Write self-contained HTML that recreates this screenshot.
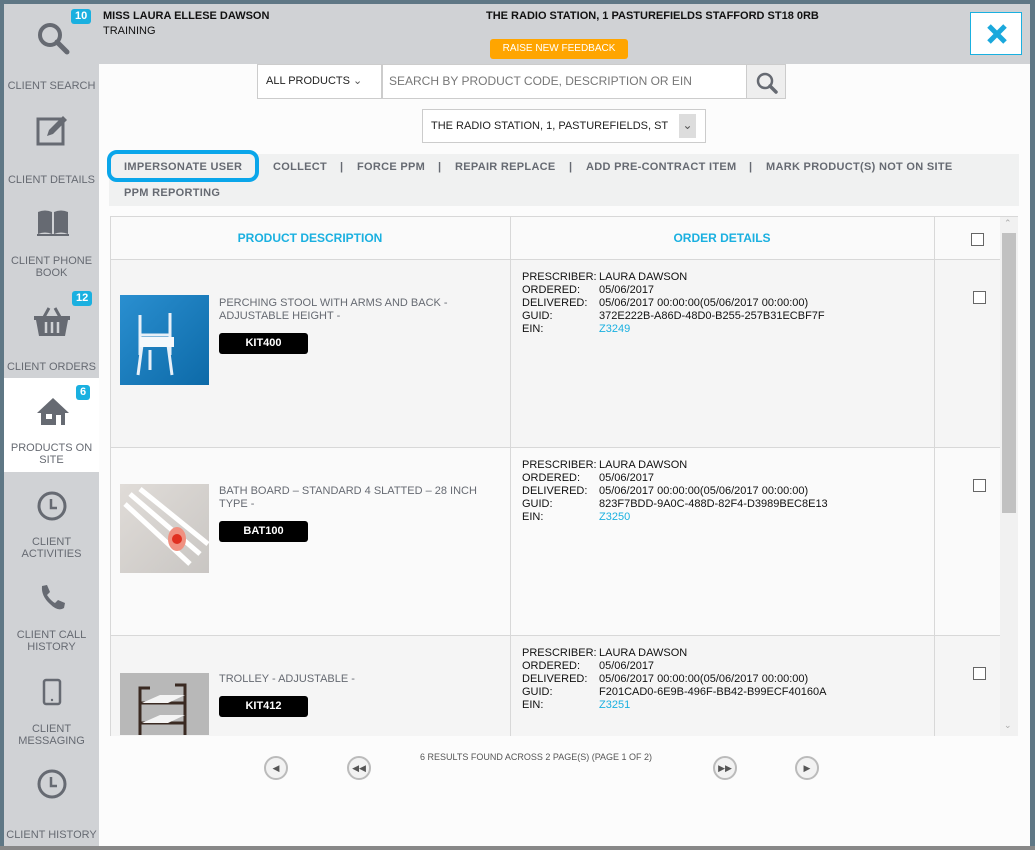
<!DOCTYPE html>
<html><head><meta charset="utf-8"><style>
*{margin:0;padding:0;box-sizing:border-box}
body{width:1035px;height:850px;overflow:hidden;background:#5f7785;font-family:"Liberation Sans",Arial,sans-serif;position:relative}
.a{position:absolute}
#frame{left:4px;top:4px;width:1026px;height:842px;background:#fcfcfc}
#side{left:4px;top:4px;width:95px;height:842px;background:#d0d2d5}
#head{left:99px;top:4px;width:931px;height:60px;background:#d0d2d5}
.nav{position:absolute;left:0;width:95px;text-align:center;color:#666a72;font-size:11px;line-height:12px}
.badge{position:absolute;background:#1ab0e0;color:#fff;font-size:11px;font-weight:bold;border-radius:3px;padding:1px 4px;line-height:13px}
.t{font-size:11px;color:#111}
.lnk{position:absolute;font-size:11px;font-weight:bold;color:#666a72;letter-spacing:0.3px;white-space:nowrap}
.code{position:absolute;left:219px;width:89px;height:21px;background:#000;color:#fff;font-weight:bold;font-size:11px;text-align:center;line-height:21px;border-radius:3px}
.desc{position:absolute;left:219px;font-size:11px;color:#666a72;line-height:13px;width:270px}
.od{position:absolute;left:522px;font-size:11px;color:#111;line-height:13px}
.od span{display:inline-block;width:77px}
.od b{font-weight:normal;color:#1ab0e0}
.cb{position:absolute;left:973px;width:13px;height:13px;border:1px solid #666;background:#fff}
.pg{position:absolute;top:756px;width:24px;height:24px;border-radius:50%;border:2px solid #bbb;background:#f2f2f2;color:#555;font-size:9px;text-align:center;line-height:20px}
</style></head><body>
<div class="a" id="frame"></div>
<div class="a" id="side">
  <svg class="a" style="left:32px;top:17px" width="36" height="36" viewBox="0 0 36 36"><circle cx="14" cy="14" r="10" fill="none" stroke="#666a72" stroke-width="4"/><line x1="21" y1="21" x2="31" y2="31" stroke="#666a72" stroke-width="5" stroke-linecap="round"/></svg>
  <div class="badge" style="left:67px;top:5px">10</div>
  <div class="nav" style="top:76px">CLIENT SEARCH</div>
  <svg class="a" style="left:31px;top:110px" width="34" height="34" viewBox="0 0 34 34"><rect x="3" y="5" width="25" height="25" fill="none" stroke="#666a72" stroke-width="3"/><path d="M12 22 L14 16 L28 2 L32 6 L18 20 Z" fill="#666a72"/></svg>
  <div class="nav" style="top:170px">CLIENT DETAILS</div>
  <svg class="a" style="left:32px;top:205px" width="34" height="28" viewBox="0 0 34 28"><path d="M2 3 Q9 0 16 3 V25 Q9 22 2 25Z M18 3 Q25 0 32 3 V25 Q25 22 18 25Z" fill="#666a72"/><path d="M1 26 H33" stroke="#666a72" stroke-width="2"/></svg>
  <div class="nav" style="top:251px">CLIENT PHONE<br>BOOK</div>
  <svg class="a" style="left:28px;top:302px" width="40" height="32" viewBox="0 0 40 32"><path d="M12 11 L17 2 M28 11 L23 2" stroke="#666a72" stroke-width="3"/><path d="M2 10 H38 V14 H36 L33 30 H7 L4 14 H2Z" fill="#666a72"/><path d="M14 16 V27 M20 16 V27 M26 16 V27" stroke="#d0d2d5" stroke-width="2.5"/></svg>
  <div class="badge" style="left:68px;top:287px">12</div>
  <div class="nav" style="top:357px">CLIENT ORDERS</div>
  <div class="a" style="left:0;top:374px;width:95px;height:94px;background:#fff"></div>
  <svg class="a" style="left:32px;top:392px" width="34" height="30" viewBox="0 0 34 30"><path d="M17 2 L1 17 H5 V29 H29 V17 H33Z" fill="#666a72"/><rect x="10" y="18" width="6" height="5" fill="#fff"/><rect x="20" y="19" width="5" height="10" fill="#fff"/></svg>
  <div class="badge" style="left:72px;top:381px">6</div>
  <div class="nav" style="top:438px">PRODUCTS ON<br>SITE</div>
  <svg class="a" style="left:32px;top:486px" width="32" height="32" viewBox="0 0 32 32"><circle cx="16" cy="16" r="13" fill="none" stroke="#666a72" stroke-width="3"/><path d="M15 9 V18 H21" fill="none" stroke="#666a72" stroke-width="2.5"/></svg>
  <div class="nav" style="top:532px">CLIENT<br>ACTIVITIES</div>
  <svg class="a" style="left:34px;top:580px" width="28" height="28" viewBox="0 0 28 28"><path d="M4 2 L9 1 L12 8 L9 11 Q13 17 17 19 L20 16 L27 19 L26 24 Q20 28 12 20 Q3 12 4 2Z" fill="#666a72"/></svg>
  <div class="nav" style="top:625px">CLIENT CALL<br>HISTORY</div>
  <svg class="a" style="left:38px;top:674px" width="20" height="28" viewBox="0 0 20 28"><rect x="2" y="2" width="16" height="24" rx="2" fill="none" stroke="#666a72" stroke-width="2.5"/><circle cx="10" cy="22" r="1.2" fill="#666a72"/></svg>
  <div class="nav" style="top:719px">CLIENT<br>MESSAGING</div>
  <svg class="a" style="left:32px;top:764px" width="32" height="32" viewBox="0 0 32 32"><circle cx="16" cy="16" r="13" fill="none" stroke="#666a72" stroke-width="3"/><path d="M15 9 V18 H21" fill="none" stroke="#666a72" stroke-width="2.5"/></svg>
  <div class="nav" style="top:825px">CLIENT HISTORY</div>
</div>
<div class="a" id="head"></div>
<div class="a t" style="left:103px;top:10px;font-weight:bold">MISS LAURA ELLESE DAWSON</div>
<div class="a t" style="left:103px;top:25px">TRAINING</div>
<div class="a t" style="left:486px;top:10px;font-weight:bold">THE RADIO STATION, 1 PASTUREFIELDS STAFFORD ST18 0RB</div>
<div class="a" style="left:490px;top:39px;width:138px;height:20px;background:#ffa500;border-radius:3px;color:#fff;font-size:10px;text-align:center;line-height:20px">RAISE NEW FEEDBACK</div>
<div class="a" style="left:970px;top:12px;width:52px;height:43px;background:#fff;border:1px solid #1ab0e0"><svg style="position:absolute;left:15px;top:10px" width="22" height="22" viewBox="0 0 22 22"><path d="M3 3 L19 19 M19 3 L3 19" stroke="#1aa8dc" stroke-width="5"/></svg></div>

<div class="a" style="left:257px;top:64px;width:125px;height:35px;border:1px solid #ccc;background:#fff;font-size:11px;color:#222;line-height:33px;padding-left:8px">ALL PRODUCTS <span style="color:#555">&#8964;</span></div>
<div class="a" style="left:382px;top:64px;width:365px;height:35px;border:1px solid #ccc;background:#fff;font-size:12px;color:#777;line-height:33px;padding-left:6px">SEARCH BY PRODUCT CODE, DESCRIPTION OR EIN</div>
<div class="a" style="left:746px;top:64px;width:40px;height:35px;border:1px solid #ccc;background:#eee"><svg style="position:absolute;left:8px;top:6px" width="24" height="24" viewBox="0 0 24 24"><circle cx="10" cy="10" r="7" fill="none" stroke="#666a72" stroke-width="2.5"/><line x1="15" y1="15" x2="21" y2="21" stroke="#666a72" stroke-width="3.5" stroke-linecap="round"/></svg></div>
<div class="a" style="left:422px;top:109px;width:284px;height:34px;border:1px solid #ccc;background:#fff;font-size:11px;color:#222;line-height:32px;padding-left:8px;white-space:nowrap;overflow:hidden">THE RADIO STATION, 1, PASTUREFIELDS, ST</div>
<div class="a" style="left:679px;top:114px;width:17px;height:24px;background:#ddd;color:#555;font-size:12px;text-align:center;line-height:22px">&#8964;</div>

<div class="a" style="left:109px;top:154px;width:910px;height:52px;background:#f0f1f1"></div>
<div class="a" style="left:107px;top:150px;width:152px;height:32px;border:4px solid #0aa6ea;border-radius:10px"></div>
<div class="lnk" style="left:124px;top:161px">IMPERSONATE USER</div>
<div class="lnk" style="left:273px;top:161px">COLLECT</div>
<div class="lnk" style="left:340px;top:161px">|</div>
<div class="lnk" style="left:357px;top:161px">FORCE PPM</div>
<div class="lnk" style="left:438px;top:161px">|</div>
<div class="lnk" style="left:455px;top:161px">REPAIR REPLACE</div>
<div class="lnk" style="left:569px;top:161px">|</div>
<div class="lnk" style="left:586px;top:161px">ADD PRE-CONTRACT ITEM</div>
<div class="lnk" style="left:749px;top:161px">|</div>
<div class="lnk" style="left:766px;top:161px">MARK PRODUCT(S) NOT ON SITE</div>
<div class="lnk" style="left:124px;top:187px">PPM REPORTING</div>

<div class="a" style="left:110px;top:216px;width:908px;height:520px;background:#fafafa;border:1px solid #d8d8d8"></div>
<div class="a" style="left:111px;top:260px;width:889px;height:187px;background:#f5f5f5"></div>
<div class="a" style="left:111px;top:636px;width:889px;height:100px;background:#f5f5f5"></div>
<div class="a" style="left:110px;top:259px;width:890px;height:1px;background:#d8d8d8"></div>
<div class="a" style="left:110px;top:447px;width:890px;height:1px;background:#d8d8d8"></div>
<div class="a" style="left:110px;top:635px;width:890px;height:1px;background:#d8d8d8"></div>
<div class="a" style="left:510px;top:216px;width:1px;height:520px;background:#d8d8d8"></div>
<div class="a" style="left:934px;top:216px;width:1px;height:520px;background:#d8d8d8"></div>
<div class="a" style="left:1000px;top:217px;width:18px;height:519px;background:#f1f1f1"></div>
<div class="a" style="left:1002px;top:233px;width:14px;height:280px;background:#c1c1c1"></div>
<div class="a" style="left:1004px;top:218px;font-size:9px;color:#aaa">&#8963;</div>
<div class="a" style="left:1004px;top:720px;font-size:9px;color:#aaa">&#8964;</div>
<div class="a" style="left:110px;top:231px;width:400px;text-align:center;font-size:12px;font-weight:bold;color:#1ab0e0">PRODUCT DESCRIPTION</div>
<div class="a" style="left:510px;top:231px;width:424px;text-align:center;font-size:12px;font-weight:bold;color:#1ab0e0">ORDER DETAILS</div>
<div class="cb" style="top:233px;left:971px"></div>

<div class="a" style="left:120px;top:295px;width:89px;height:90px;background:linear-gradient(135deg,#2a8fd0,#0d6aa8)"><svg width="89" height="90"><path d="M20 20 V60 M50 18 V60 M20 40 H50 M22 50 L18 80 M48 50 L52 80 M30 55 L30 75" stroke="#e8f0f8" stroke-width="3" fill="none"/><rect x="20" y="42" width="34" height="10" fill="#f5f8fb"/></svg></div>
<div class="desc" style="top:297px">PERCHING STOOL WITH ARMS AND BACK - ADJUSTABLE HEIGHT -</div>
<div class="code" style="top:333px">KIT400</div>
<div class="od" style="top:271px"><span>PRESCRIBER:</span>LAURA DAWSON<br><span>ORDERED:</span>05/06/2017<br><span>DELIVERED:</span>05/06/2017 00:00:00(05/06/2017 00:00:00)<br><span>GUID:</span>372E222B-A86D-48D0-B255-257B31ECBF7F<br><span>EIN:</span><b>Z3249</b></div>
<div class="cb" style="top:291px"></div>

<div class="a" style="left:120px;top:484px;width:89px;height:89px;background:linear-gradient(135deg,#e0dcd8,#c9c6c3)"><svg width="89" height="89"><path d="M5 20 L70 80 M10 10 L80 70 M20 5 L88 60" stroke="#fff" stroke-width="5"/><ellipse cx="57" cy="55" rx="9" ry="12" fill="#f09080"/><circle cx="57" cy="55" r="5" fill="#e03020"/></svg></div>
<div class="desc" style="top:485px;width:260px">BATH BOARD – STANDARD 4 SLATTED – 28 INCH TYPE -</div>
<div class="code" style="top:521px">BAT100</div>
<div class="od" style="top:459px"><span>PRESCRIBER:</span>LAURA DAWSON<br><span>ORDERED:</span>05/06/2017<br><span>DELIVERED:</span>05/06/2017 00:00:00(05/06/2017 00:00:00)<br><span>GUID:</span>823F7BDD-9A0C-488D-82F4-D3989BEC8E13<br><span>EIN:</span><b>Z3250</b></div>
<div class="cb" style="top:479px"></div>

<div class="a" style="left:120px;top:673px;width:89px;height:62px;background:#b8b8b8"><svg width="89" height="62"><path d="M20 62 V15 H30 M65 62 V12 H55 M20 30 H65 M20 50 H65" stroke="#3a2a22" stroke-width="3" fill="none"/><path d="M22 30 L40 22 H65 L48 30Z M22 50 L40 42 H65 L48 50Z" fill="#f4f4f4"/></svg></div>
<div class="desc" style="top:673px">TROLLEY - ADJUSTABLE -</div>
<div class="code" style="top:696px">KIT412</div>
<div class="od" style="top:647px"><span>PRESCRIBER:</span>LAURA DAWSON<br><span>ORDERED:</span>05/06/2017<br><span>DELIVERED:</span>05/06/2017 00:00:00(05/06/2017 00:00:00)<br><span>GUID:</span>F201CAD0-6E9B-496F-BB42-B99ECF40160A<br><span>EIN:</span><b>Z3251</b></div>
<div class="cb" style="top:667px"></div>

<div class="pg" style="left:264px">&#9664;</div>
<div class="pg" style="left:347px">&#9664;&#9664;</div>
<div class="a" style="left:420px;top:752px;font-size:9px;color:#555">6 RESULTS FOUND ACROSS 2 PAGE(S) (PAGE 1 OF 2)</div>
<div class="pg" style="left:713px">&#9654;&#9654;</div>
<div class="pg" style="left:795px">&#9654;</div>
<div class="a" style="left:0;top:846px;width:1035px;height:4px;background:#888"></div>
</body></html>
